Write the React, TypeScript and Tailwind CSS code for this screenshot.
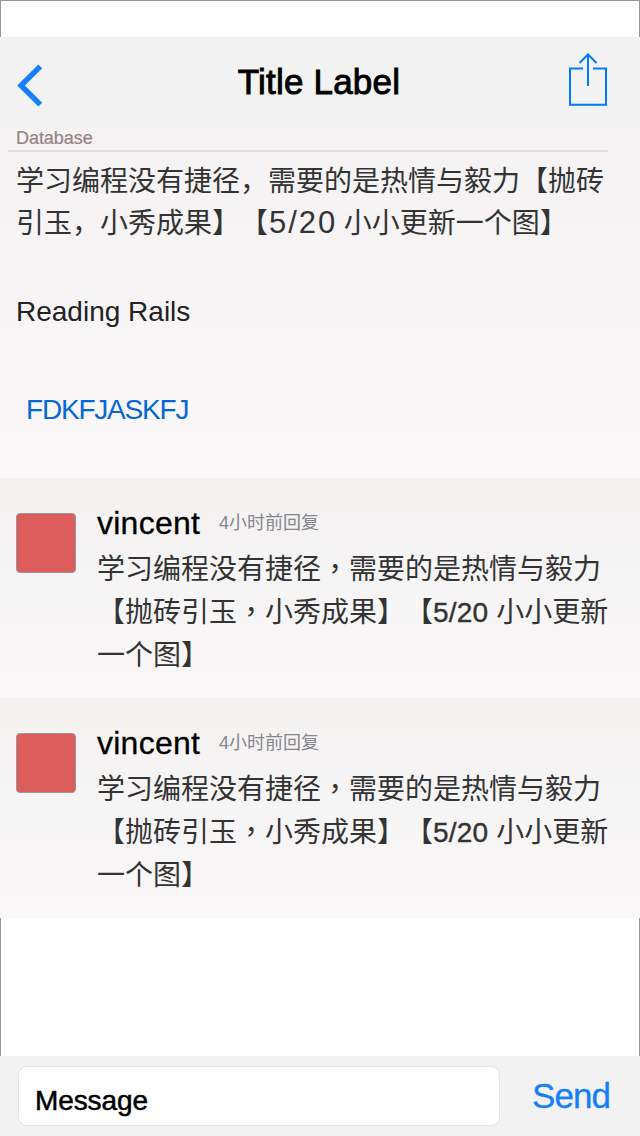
import React from "react";

const latin = "font-['Liberation_Sans',sans-serif]";

function BackIcon() {
  return (
    <svg width="26" height="43" viewBox="0 0 26 43" fill="none" aria-hidden="true">
      <path d="M23.3 2.4 L4 21.5 L23.3 40.6" stroke="#157efb" strokeWidth="5.4" />
    </svg>
  );
}

function ShareIcon() {
  return (
    <svg width="40" height="54" viewBox="0 0 40 54" fill="none" stroke="#007aff" strokeWidth="2" aria-hidden="true">
      <path d="M15 15.5 H2 V51.7 H38 V15.5 H25" />
      <path d="M20 33 V2" />
      <path d="M11.5 10 L20 1.5 L28.5 10" />
    </svg>
  );
}

function Header() {
  return (
    <header className="flex h-[88px] shrink-0 items-start justify-between bg-[#f2f2f2] pl-[17px] pr-8">
      <div className="w-[100px] pt-[27px]">
        <BackIcon />
      </div>
      <h1
        className={`${latin} whitespace-nowrap pt-[25px] pl-[13px] text-[35px] leading-10 tracking-[0.2px] text-black [-webkit-text-stroke:0.9px_black]`}
      >
        Title Label
      </h1>
      <div className="flex w-[100px] justify-end pt-[16px]">
        <ShareIcon />
      </div>
    </header>
  );
}

function Topic() {
  return (
    <section className="h-[353px] shrink-0 bg-linear-to-b from-[#f4f2f3] to-[#f9f7f8]">
      <div className="ml-2 mr-8 h-[27px] border-b-2 border-[#dfdddf] pl-2">
        <div className={`${latin} pt-[2px] text-[18px] leading-[22px] tracking-[-0.05px] text-[#968487] [-webkit-text-stroke:0.2px_#968487]`}>
          Database
        </div>
      </div>
      <h2 className="whitespace-nowrap pl-4 pt-[6px] font-['Noto_Sans_CJK_SC',sans-serif] text-[28px] leading-[42px] text-[#333333] [text-spacing-trim:space-all]">
        学习编程没有捷径，需要的是热情与毅力【抛砖
        <br />
        引玉，小秀成果】【
        <span className={`${latin} ml-px text-[31px] leading-none tracking-[2px]`}>5/20</span> 小小更新一个图】
      </h2>
      <p className={`${latin} pl-4 pt-[49px] text-[28px] leading-[42px] text-[#222222]`}>
        Reading Rails
      </p>
      <a className={`${latin} block pl-[26px] pt-[56px] text-[28px] leading-[42px] tracking-[-1.2px] text-[#0567d6]`}>
        FDKFJASKFJ
      </a>
    </section>
  );
}

function Comma() {
  return (
    <span className="font-['Noto_Sans_CJK_TC',sans-serif] leading-none" lang="zh-TW">
      ，
    </span>
  );
}

function Comment({ name, time }: { name: string; time: string }) {
  return (
    <article className="flex h-[220px] shrink-0 items-start gap-[21px] bg-linear-to-b from-[#f3f2f1] to-[#f9f7f8] pl-4">
      <div className="mt-[35px] size-[60px] rounded-[4px] border border-[#979797] bg-[#dd5c5c]" />
      <div className="whitespace-nowrap pt-[26px]">
        <div className="flex items-start">
          <div
            className={`${latin} w-[122px] text-[32px] leading-[38px] tracking-[0.25px] text-black [-webkit-text-stroke:0.3px_black]`}
          >
            {name}
          </div>
          <div className="pt-[6px] font-['Liberation_Sans','Noto_Sans_CJK_SC',sans-serif] text-[18px] leading-[26px] text-[#86868c]">
            {time}
          </div>
        </div>
        <p className="pt-[4px] font-['Noto_Sans_CJK_SC',sans-serif] text-[28px] leading-[43px] text-[#333333] [text-spacing-trim:space-all]">
          学习编程没有捷径
          <Comma />
          需要的是热情与毅力
          <br />
          【抛砖引玉
          <Comma />
          小秀成果】【
          <span className={`${latin} leading-none tracking-[0.2px] [-webkit-text-stroke:0.4px_#333]`}>5/20&nbsp;</span>
          小小更新
          <br />
          一个图】
        </p>
      </div>
    </article>
  );
}

function Composer() {
  return (
    <footer className="flex h-20 shrink-0 items-start bg-[#f2f2f2] pl-[18px] pt-[10px]">
      <div
        className={`${latin} h-[60px] w-[482px] rounded-[9px] border border-[#e4e4e4] bg-white pl-4 pt-[16px] text-[28px] leading-9 tracking-[-0.1px] text-black [-webkit-text-stroke:0.5px_black]`}
      >
        Message
      </div>
      <button
        className={`${latin} ml-8 pt-[10px] text-[35px] leading-10 tracking-[-0.9px] text-[#157efb] [-webkit-text-stroke:0.3px_#157efb]`}
      >
        Send
      </button>
    </footer>
  );
}

export default function App() {
  return (
    <main className="flex h-[1136px] w-[640px] flex-col overflow-hidden bg-white">
      <div className="h-[37px] shrink-0 border-x border-t border-[#979797]" />
      <Header />
      <Topic />
      <Comment name="vincent" time="4小时前回复" />
      <Comment name="vincent" time="4小时前回复" />
      <div className="grow border-x border-[#979797]" />
      <Composer />
    </main>
  );
}
